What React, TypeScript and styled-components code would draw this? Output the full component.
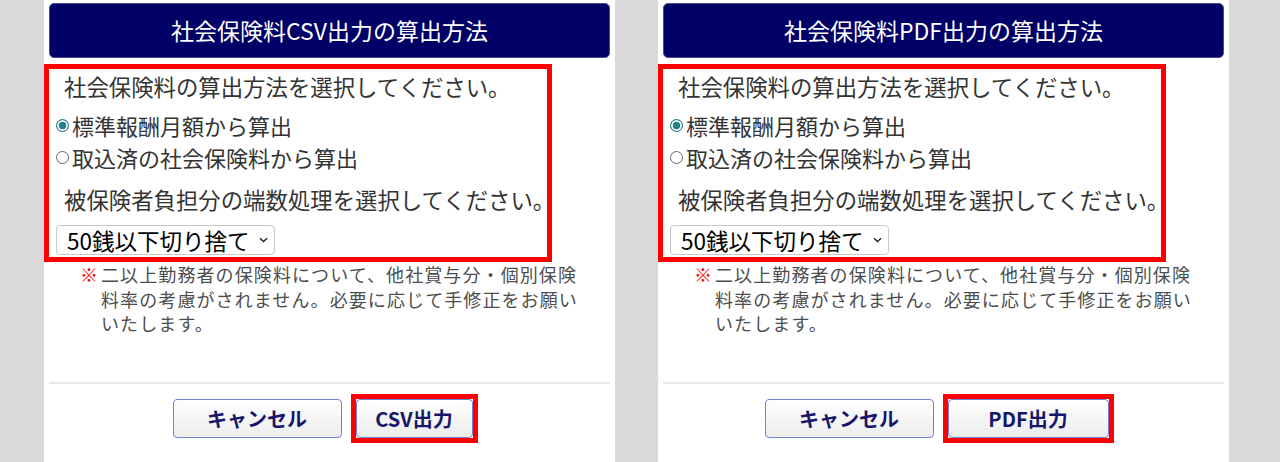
import React from "react";
import styled, { createGlobalStyle } from "styled-components";

const GlobalStyle = createGlobalStyle`
  html, body {
    margin: 0;
    padding: 0;
    background: #d9d9d9;
  }
  body {
    font-family: "Noto Sans CJK JP", "Noto Sans", sans-serif;
  }
`;

const Page = styled.div`
  display: flex;
  gap: 43px;
  padding-left: 44px;
  height: 462px;
  overflow: hidden;
  background: #d9d9d9;
`;

const Panel = styled.section`
  width: 571px;
  flex: none;
  background: #ffffff;
  padding: 3px 5px 0;
  box-sizing: border-box;
  display: flex;
  flex-direction: column;
`;

const Header = styled.h2`
  margin: 0;
  height: 55px;
  background: #000066;
  border: 1px solid #4b4b8c;
  border-radius: 5px;
  box-sizing: border-box;
  color: #ffffff;
  font-size: 23px;
  font-weight: normal;
  line-height: 52px;
  text-align: center;
`;

const Form = styled.div`
  margin-top: 11px;
  width: 498px;
  outline: 5px solid #ff0000;
  padding: 1px 0 2px;
  color: #333333;
  font-size: 22.4px;
  display: flex;
  flex-direction: column;
  align-items: flex-start;
`;

const Prompt = styled.p`
  margin: 0;
  padding-left: 15px;
  line-height: 32px;
  white-space: nowrap;
`;

const RadioList = styled.div`
  margin: 7px 0 10px;
  padding-left: 7px;
  display: flex;
  flex-direction: column;
`;

const RadioLabel = styled.label`
  display: flex;
  align-items: center;
  gap: 3px;
  height: 32px;
  line-height: 32px;
  font-size: 22px;
  white-space: nowrap;
`;

const Radio = styled.input.attrs({ type: "radio" })`
  appearance: none;
  margin: 0;
  width: 13px;
  height: 13px;
  border-radius: 50%;
  border: 1.2px solid #666666;
  box-sizing: border-box;
  background: #ffffff;
  flex: none;

  &:checked {
    border: 1.6px solid #1f7f8a;
    background: #1f7f8a;
    box-shadow: inset 0 0 0 1.8px #ffffff;
  }
`;

const SelectBox = styled.div`
  margin: 10px 0 0 7px;
  width: 219px;
  height: 30px;
  box-sizing: border-box;
  display: flex;
  align-items: center;
  gap: 4px;
  border: 1px solid #c9c9c9;
  border-radius: 4px;
  padding: 0 6px 0 10px;
  background: #ffffff;
`;

const Select = styled.select`
  appearance: none;
  border: none;
  background: transparent;
  flex: 1;
  min-width: 0;
  height: 28px;
  line-height: 28px;
  font-family: inherit;
  font-size: 22.5px;
  color: #000000;
  padding: 0;
  outline: none;
`;

const Note = styled.div`
  display: flex;
  margin: 5px 0 0 31px;
  font-size: 18px;
  letter-spacing: 1.1px;
  line-height: 24.5px;
  color: #4d4d4d;
  white-space: nowrap;
`;

const Mark = styled.span`
  color: #ff0000;
  flex: none;
  width: 21px;
  letter-spacing: 0;
`;

const Divider = styled.hr`
  margin: 46px 0 0;
  border: none;
  height: 2px;
  background: #e8e8e8;
`;

const ButtonRow = styled.div`
  display: flex;
  justify-content: center;
  gap: 14px;
  padding-right: 14px;
  margin-top: 15px;
`;

const Highlight = styled.span`
  display: inline-flex;
  outline: 5px solid #ff0000;
`;

const Button = styled.button<{ $w: number }>`
  width: ${(p) => p.$w}px;
  height: 39px;
  box-sizing: border-box;
  border: 1.5px solid #6f82d4;
  border-radius: 4px;
  background: linear-gradient(#ffffff, #ececec);
  color: #17176a;
  font-family: "Noto Sans CJK JP", sans-serif;
  font-weight: bold;
  font-size: 20px;
  padding: 0;
`;

const Chevron = () => (
  <svg width="9" height="6" viewBox="0 0 9 6" fill="none">
    <path d="M1 1.2 L4.5 4.6 L8 1.2" stroke="#222" strokeWidth="1.4" />
  </svg>
);

type DialogProps = {
  kind: string;
  outWidth: number;
};

const Dialog = ({ kind, outWidth }: DialogProps) => (
  <Panel>
    <Header>社会保険料{kind}出力の算出方法</Header>
    <Form>
      <Prompt>社会保険料の算出方法を選択してください。</Prompt>
      <RadioList>
        <RadioLabel>
          <Radio name={`m-${kind}`} defaultChecked />
          標準報酬月額から算出
        </RadioLabel>
        <RadioLabel>
          <Radio name={`m-${kind}`} />
          取込済の社会保険料から算出
        </RadioLabel>
      </RadioList>
      <Prompt>被保険者負担分の端数処理を選択してください。</Prompt>
      <SelectBox>
        <Select defaultValue="50">
          <option value="50">50銭以下切り捨て</option>
        </Select>
        <Chevron />
      </SelectBox>
    </Form>
    <Note>
      <Mark>※</Mark>
      <span>
        二以上勤務者の保険料について、他社賞与分・個別保険
        <br />
        料率の考慮がされません。必要に応じて手修正をお願い
        <br />
        いたします。
      </span>
    </Note>
    <Divider />
    <ButtonRow>
      <Button $w={169}>キャンセル</Button>
      <Highlight>
        <Button $w={outWidth}>{kind}出力</Button>
      </Highlight>
    </ButtonRow>
  </Panel>
);

export default function App() {
  return (
    <>
      <GlobalStyle />
      <Page>
        <Dialog kind="CSV" outWidth={117} />
        <Dialog kind="PDF" outWidth={161} />
      </Page>
    </>
  );
}
